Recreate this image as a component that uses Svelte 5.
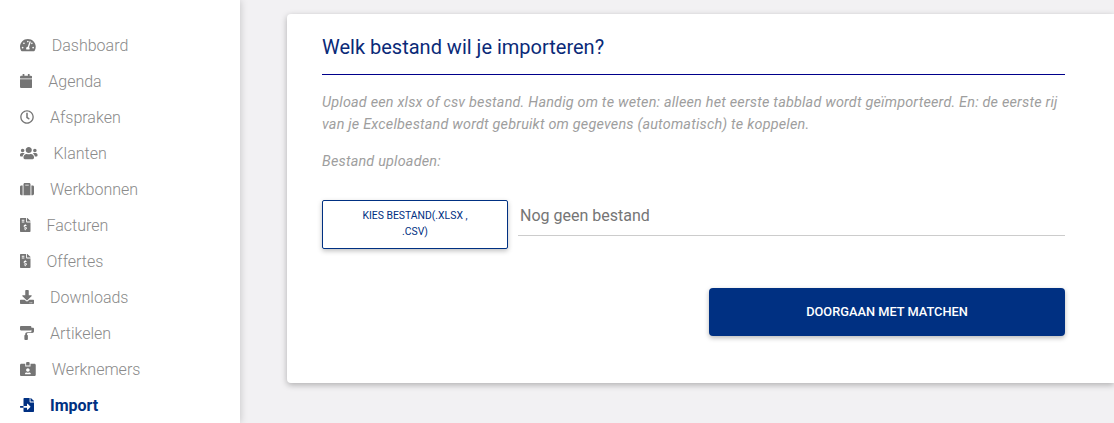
<script>
	const menu = [
		{ label: 'Dashboard', w: 576, d: 'M288 32C128.94 32 0 160.94 0 320c0 52.8 14.25 102.26 39.06 144.8 5.61 9.62 16.3 15.2 27.44 15.2h443c11.14 0 21.83-5.58 27.44-15.2C561.75 422.26 576 372.8 576 320c0-159.06-128.94-288-288-288zm0 64c14.71 0 26.58 10.13 30.32 23.65-1.11 2.26-2.64 4.23-3.45 6.67l-9.22 27.67c-5.13 3.49-10.97 6.01-17.64 6.01-17.67 0-32-14.33-32-32S270.33 96 288 96zM96 384c-17.67 0-32-14.33-32-32s14.33-32 32-32 32 14.33 32 32-14.33 32-32 32zm48-160c-17.67 0-32-14.33-32-32s14.33-32 32-32 32 14.33 32 32-14.33 32-32 32zm246.77-72.41l-61.33 184C343.13 347.33 352 364.54 352 384c0 11.72-3.38 22.55-8.88 32H232.88c-5.5-9.45-8.88-20.28-8.88-32 0-33.94 26.5-61.43 59.9-63.59l61.34-184.01c4.17-12.56 17.73-19.45 30.36-15.17 12.57 4.19 19.35 17.79 15.17 30.36zm14.66 57.2l15.52-46.55c3.47-1.29 7.13-2.23 11.05-2.23 17.67 0 32 14.33 32 32s-14.33 32-32 32c-11.38-.01-20.89-6.28-26.57-15.22zM480 384c-17.67 0-32-14.33-32-32s14.33-32 32-32 32 14.33 32 32-14.33 32-32 32z' },
		{ label: 'Agenda', w: 448, d: 'M12 192h424c6.6 0 12 5.4 12 12v260c0 26.5-21.5 48-48 48H48c-26.5 0-48-21.5-48-48V204c0-6.6 5.4-12 12-12zm436-44v-36c0-26.5-21.5-48-48-48h-48V12c0-6.6-5.4-12-12-12h-40c-6.6 0-12 5.4-12 12v52H160V12c0-6.6-5.4-12-12-12h-40c-6.6 0-12 5.4-12 12v52H48C21.5 64 0 85.5 0 112v36c0 6.6 5.4 12 12 12h424c6.6 0 12-5.4 12-12z' },
		{ label: 'Afspraken', w: 512, d: 'M256 8C119 8 8 119 8 256s111 248 248 248 248-111 248-248S393 8 256 8zm0 448c-110.5 0-200-89.5-200-200S145.5 56 256 56s200 89.5 200 200-89.5 200-200 200zm61.8-104.4l-84.9-61.7c-3.1-2.3-4.9-5.9-4.9-9.7V116c0-6.6 5.4-12 12-12h32c6.6 0 12 5.4 12 12v141.7l66.8 48.6c5.4 3.9 6.5 11.4 2.6 16.8L334.6 349c-3.9 5.3-11.4 6.5-16.8 2.6z' },
		{ label: 'Klanten', w: 640, d: 'M96 224c35.3 0 64-28.7 64-64s-28.7-64-64-64-64 28.7-64 64 28.7 64 64 64zm448 0c35.3 0 64-28.7 64-64s-28.7-64-64-64-64 28.7-64 64 28.7 64 64 64zm32 32h-64c-17.6 0-33.5 7.1-45.1 18.6 40.3 22.1 68.9 62 75.1 109.4h66c17.7 0 32-14.3 32-32v-32c0-35.3-28.7-64-64-64zm-256 0c61.9 0 112-50.1 112-112S381.9 32 320 32 208 82.1 208 144s50.1 112 112 112zm76.8 32h-8.3c-20.8 10-43.9 16-68.5 16s-47.6-6-68.5-16h-8.3C179.6 288 128 339.6 128 403.2V432c0 26.5 21.5 48 48 48h288c26.5 0 48-21.5 48-48v-28.8c0-63.6-51.6-115.2-115.2-115.2zm-223.7-13.4C161.5 263.1 145.6 256 128 256H64c-35.3 0-64 28.7-64 64v32c0 17.7 14.3 32 32 32h65.9c6.3-47.4 34.9-87.3 75.2-109.4z' },
		{ label: 'Werkbonnen', w: 512, d: 'M128 480h256V80c0-26.5-21.5-48-48-48H176c-26.5 0-48 21.5-48 48v400zm64-384h128v32H192V96zm320 80v256c0 26.5-21.5 48-48 48h-48V128h48c26.5 0 48 21.5 48 48zM96 480H48c-26.5 0-48-21.5-48-48V176c0-26.5 21.5-48 48-48h48v352z' },
		{ label: 'Facturen', w: 384, d: 'M377 105L279.1 7c-4.5-4.5-10.6-7-17-7H256v128h128v-6.1c0-6.3-2.5-12.4-7-16.9zm-153 31V0H24C10.7 0 0 10.7 0 24v464c0 13.3 10.7 24 24 24h336c13.3 0 24-10.7 24-24V160H248c-13.2 0-24-10.8-24-24zM64 72c0-4.42 3.58-8 8-8h80c4.42 0 8 3.58 8 8v16c0 4.42-3.58 8-8 8H72c-4.42 0-8-3.58-8-8V72zm0 80v-16c0-4.42 3.58-8 8-8h80c4.42 0 8 3.58 8 8v16c0 4.42-3.58 8-8 8H72c-4.42 0-8-3.58-8-8zm144 263.88V440c0 4.42-3.58 8-8 8h-16c-4.42 0-8-3.58-8-8v-24.29c-11.29-.58-22.27-4.52-31.37-11.35-3.9-2.93-4.1-8.77-.57-12.14l11.75-11.21c2.77-2.64 6.89-2.76 10.13-.73 3.87 2.42 8.26 3.72 12.82 3.72h28.11c6.5 0 11.8-5.92 11.8-13.19 0-5.95-3.61-11.19-8.77-12.73l-45-13.5c-18.59-5.58-31.58-23.42-31.58-43.39 0-24.52 19.05-44.44 42.67-45.07V232c0-4.42 3.58-8 8-8h16c4.42 0 8 3.58 8 8v24.29c11.29.58 22.27 4.51 31.37 11.35 3.9 2.93 4.1 8.77.57 12.14l-11.75 11.21c-2.77 2.64-6.89 2.76-10.13.73-3.87-2.43-8.26-3.72-12.82-3.72h-28.11c-6.5 0-11.8 5.92-11.8 13.19 0 5.95 3.61 11.19 8.77 12.73l45 13.5c18.59 5.58 31.58 23.42 31.58 43.39 0 24.53-19.05 44.44-42.67 45.07z' },
		{ label: 'Offertes', w: 384, d: 'M377 105L279.1 7c-4.5-4.5-10.6-7-17-7H256v128h128v-6.1c0-6.3-2.5-12.4-7-16.9zm-153 31V0H24C10.7 0 0 10.7 0 24v464c0 13.3 10.7 24 24 24h336c13.3 0 24-10.7 24-24V160H248c-13.2 0-24-10.8-24-24zM64 72c0-4.42 3.58-8 8-8h80c4.42 0 8 3.58 8 8v16c0 4.42-3.58 8-8 8H72c-4.42 0-8-3.58-8-8V72zm0 80v-16c0-4.42 3.58-8 8-8h80c4.42 0 8 3.58 8 8v16c0 4.42-3.58 8-8 8H72c-4.42 0-8-3.58-8-8zm144 263.88V440c0 4.42-3.58 8-8 8h-16c-4.42 0-8-3.58-8-8v-24.29c-11.29-.58-22.27-4.52-31.37-11.35-3.9-2.93-4.1-8.77-.57-12.14l11.75-11.21c2.77-2.64 6.89-2.76 10.13-.73 3.87 2.42 8.26 3.72 12.82 3.72h28.11c6.5 0 11.8-5.92 11.8-13.19 0-5.95-3.61-11.19-8.77-12.73l-45-13.5c-18.59-5.58-31.58-23.42-31.58-43.39 0-24.52 19.05-44.44 42.67-45.07V232c0-4.42 3.58-8 8-8h16c4.42 0 8 3.58 8 8v24.29c11.29.58 22.27 4.51 31.37 11.35 3.9 2.93 4.1 8.77.57 12.14l-11.75 11.21c-2.77 2.64-6.89 2.76-10.13.73-3.87-2.43-8.26-3.72-12.82-3.72h-28.11c-6.5 0-11.8 5.92-11.8 13.19 0 5.95 3.61 11.19 8.77 12.73l45 13.5c18.59 5.58 31.58 23.42 31.58 43.39 0 24.53-19.05 44.44-42.67 45.07z' },
		{ label: 'Downloads', w: 512, d: 'M216 0h80c13.3 0 24 10.7 24 24v168h87.7c17.8 0 26.7 21.5 14.1 34.1L269.7 378.3c-7.5 7.5-19.8 7.5-27.3 0L90.1 226.1c-12.6-12.6-3.7-34.1 14.1-34.1H192V24c0-13.3 10.7-24 24-24zm296 376v112c0 13.3-10.7 24-24 24H24c-13.3 0-24-10.7-24-24V376c0-13.3 10.7-24 24-24h146.7l49 49c20.1 20.1 52.5 20.1 72.6 0l49-49H488c13.3 0 24 10.7 24 24zm-124 88c0-11-9-20-20-20s-20 9-20 20 9 20 20 20 20-9 20-20zm64 0c0-11-9-20-20-20s-20 9-20 20 9 20 20 20 20-9 20-20z' },
		{ label: 'Artikelen', w: 512, d: 'M32 0h352c17.67 0 32 14.33 32 32v96c0 17.67-14.33 32-32 32H32c-17.67 0-32-14.33-32-32V32C0 14.33 14.33 0 32 0zM448 64h32c17.67 0 32 14.33 32 32v96c0 35.35-28.65 64-64 64H288c-17.67 0-32 14.33-32 32v32c17.67 0 32 14.33 32 32v128c0 17.67-14.33 32-32 32h-64c-17.67 0-32-14.33-32-32V352c0-17.67 14.33-32 32-32v-32c0-35.35 28.65-64 64-64h160V64z' },
		{ label: 'Werknemers', w: 576, d: 'M528 64H384v96H192V64H48C21.5 64 0 85.5 0 112v352c0 26.5 21.5 48 48 48h480c26.5 0 48-21.5 48-48V112c0-26.5-21.5-48-48-48zM288 224c35.3 0 64 28.7 64 64s-28.7 64-64 64-64-28.7-64-64 28.7-64 64-64zm93.3 224H194.7c-10.4 0-18.8-10-15.6-19.8 8.3-25.6 32.4-44.2 60.9-44.2h8.2c12.3 5.1 25.7 8 39.8 8s27.6-2.9 39.8-8h8.2c28.4 0 52.5 18.5 60.9 44.2 3.2 9.8-5.2 19.8-15.6 19.8zM352 32c0-17.7-14.3-32-32-32h-64c-17.7 0-32 14.3-32 32v96h128V32z' },
		{ label: 'Import', w: 512, active: true, d: 'M16 288c-8.8 0-16 7.2-16 16v32c0 8.8 7.2 16 16 16h112v-64H16zm336-152V0H152c-13.3 0-24 10.7-24 24v264h127.99v-65.18c0-14.28 17.29-21.41 27.36-11.27l95.7 96.43c6.6 6.65 6.6 17.39 0 24.04l-95.7 96.42c-10.06 10.14-27.36 3.01-27.36-11.27V352H128v136c0 13.3 10.7 24 24 24h336c13.3 0 24-10.7 24-24V160H376c-13.2 0-24-10.8-24-24zm153-31L407.1 7c-4.5-4.5-10.6-7-17-7H384v128h128v-6.1c0-6.3-2.5-12.4-7-16.9z' }
	];
</script>

<div class="page">
	<aside class="sidebar">
		<ul class="menu">
			{#each menu as item}
				<li class="menu-item" class:active={item.active}>
					<svg viewBox="0 0 {item.w} 512" width={(item.w / 512) * 14} height="14" fill="currentColor">
						<path d={item.d} />
					</svg>
					<span>{item.label}</span>
				</li>
			{/each}
		</ul>
	</aside>

	<main class="content">
		<section class="card">
			<h2 class="card-title">Welk bestand wil je importeren?</h2>
			<p class="intro">
				Upload een xlsx of csv bestand. Handig om te weten: alleen het eerste tabblad wordt geïmporteerd. En: de eerste rij van je Excelbestand wordt gebruikt om gegevens (automatisch) te koppelen.
			</p>
			<p class="upload-label">Bestand uploaden:</p>
			<div class="file-row">
				<button class="file-btn">Kies bestand(.xlsx , .csv)</button>
				<div class="file-name">Nog geen bestand</div>
			</div>
			<div class="actions">
				<button class="primary-btn">Doorgaan met matchen</button>
			</div>
		</section>
	</main>
</div>

<style>
	:global(body) {
		margin: 0;
		background: #f2f1f3;
		font-family: Roboto, 'Liberation Sans', sans-serif;
	}

	.page {
		display: flex;
		height: 423px;
		overflow: hidden;
	}

	.sidebar {
		flex: 0 0 240px;
		background: #fff;
		box-shadow: 0 0 8px rgba(0, 0, 0, 0.2);
		padding-top: 27px;
		box-sizing: border-box;
		position: relative;
	}

	.menu {
		list-style: none;
		margin: 0;
		padding: 0 0 0 20px;
	}

	.menu-item {
		display: flex;
		align-items: center;
		gap: 16px;
		height: 36px;
		color: #757575;
		font-size: 16px;
		font-weight: 300;
	}

	.menu-item span {
		color: #8a8a8a;
	}

	.menu-item.active {
		color: #003082;
		font-weight: 700;
	}

	.menu-item.active span {
		color: #003082;
	}

	.content {
		flex: 1;
		min-width: 0;
		padding: 14px 0 0 47px;
	}

	.card {
		height: 369px;
		box-sizing: border-box;
		background: #fff;
		border-radius: 4px 0 0 4px;
		box-shadow: 0 2px 6px rgba(0, 0, 0, 0.28);
		padding: 0 49px 0 35px;
	}

	.card-title {
		margin: 0;
		height: 61px;
		box-sizing: border-box;
		padding-top: 20px;
		border-bottom: 1px solid #00008b;
		color: #0a2a78;
		font-size: 20px;
		line-height: 26px;
		font-weight: 400;
	}

	.intro {
		margin: 17px 0 0;
		font-size: 14.4px;
		line-height: 22px;
		letter-spacing: 0.2px;
		font-style: italic;
		color: #9e9e9e;
	}

	.upload-label {
		margin: 15px 0 0;
		font-size: 14.4px;
		line-height: 22px;
		letter-spacing: 0.2px;
		font-style: italic;
		color: #9e9e9e;
	}

	.file-row {
		display: flex;
		align-items: flex-start;
		gap: 10px;
		margin-top: 27px;
	}

	.file-btn {
		flex: 0 0 186px;
		height: 49px;
		padding: 0 30px 2px;
		background: #fff;
		border: 1px solid #003082;
		border-radius: 2px;
		box-shadow: 0 2px 5px rgba(0, 0, 0, 0.25);
		color: #003082;
		font-family: inherit;
		font-size: 10.4px;
		line-height: 16px;
		text-transform: uppercase;
	}

	.file-name {
		flex: 1;
		height: 36px;
		box-sizing: border-box;
		padding-left: 2px;
		border-bottom: 1px solid #ccc;
		color: #757575;
		font-size: 16px;
		line-height: 31px;
	}

	.actions {
		display: flex;
		justify-content: flex-end;
		margin-top: 39px;
	}

	.primary-btn {
		width: 356px;
		height: 48px;
		padding-bottom: 2px;
		background: #003082;
		border: 0;
		border-radius: 4px;
		box-shadow: 0 2px 5px rgba(0, 0, 0, 0.28);
		color: #fff;
		font-family: inherit;
		font-size: 12.8px;
		font-weight: 500;
		text-transform: uppercase;
	}
</style>
